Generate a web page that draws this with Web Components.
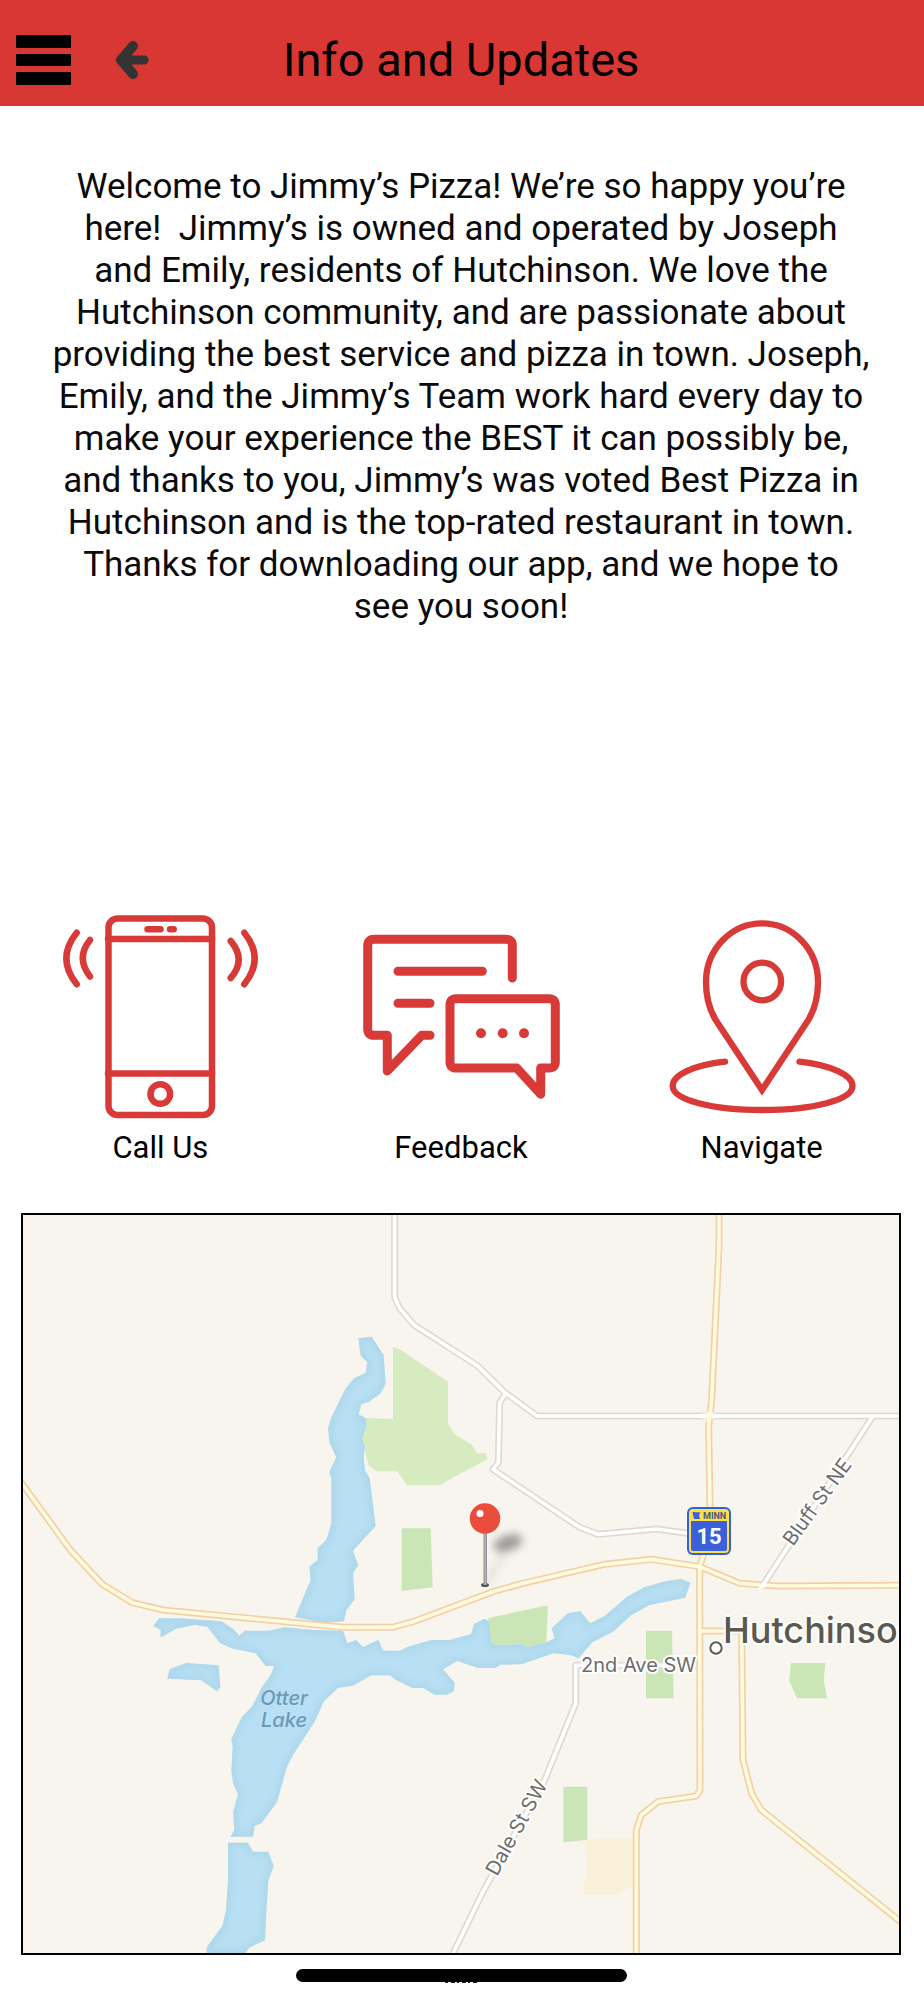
<!DOCTYPE html>
<html lang="en">
<head>
<meta charset="utf-8">
<meta name="viewport" content="width=device-width, initial-scale=1">
<title>Info and Updates</title>
<style>
  body {
    margin: 0;
    background: #fff;
    color: #0a0a0a;
    font-family: Roboto, "Liberation Sans", sans-serif;
  }
</style>
</head>
<body>
<info-page>
  <app-header slot="header">Info and Updates</app-header>
  <welcome-text slot="welcome">
    Welcome to Jimmy’s Pizza! We’re so happy you’re<br>
    here!&nbsp; Jimmy’s is owned and operated by Joseph<br>
    and Emily, residents of Hutchinson. We love the<br>
    Hutchinson community, and are passionate about<br>
    providing the best service and pizza in town. Joseph,<br>
    Emily, and the Jimmy’s Team work hard every day to<br>
    make your experience the BEST it can possibly be,<br>
    and thanks to you, Jimmy’s was voted Best Pizza in<br>
    Hutchinson and is the top-rated restaurant in town.<br>
    Thanks for downloading our app, and we hope to<br>
    see you soon!
  </welcome-text>
  <action-link slot="actions" icon="call" href="#call">Call Us</action-link>
  <action-link slot="actions" icon="feedback" href="#feedback">Feedback</action-link>
  <action-link slot="actions" icon="navigate" href="#navigate">Navigate</action-link>
  <store-map slot="map"></store-map>
  <home-indicator slot="footer"></home-indicator>
</info-page>

<script>
const createTemplate = (html) => {
  const template = document.createElement("template");
  template.innerHTML = html;
  return template;
};

class BaseElement extends HTMLElement {
  constructor() {
    super();

    this.attachShadow({ mode: "open" });
    this.shadowRoot.appendChild(
      this.constructor.template.content.cloneNode(true)
    );
  }
}

class InfoPage extends BaseElement {
  static template = createTemplate(`
  <style>
    :host {
        display: flex;
        flex-direction: column;
        min-height: 100vh;
    }
    main {
        display: flex;
        flex-direction: column;
        flex: 1;
        padding-right: 2px;
    }
    .actions {
        display: grid;
        grid-template-columns: repeat(3, 1fr);
        margin-top: 284px;
        padding: 0 10px;
    }
    .map {
        margin: 46px 21px 0;
    }
  </style>

  <slot name="header"></slot>
  <main>
    <slot name="welcome"></slot>
    <nav class="actions"><slot name="actions"></slot></nav>
    <div class="map"><slot name="map"></slot></div>
  </main>
  <slot name="footer"></slot>
`);
}

class AppHeader extends BaseElement {
  static template = createTemplate(`
  <style>
    :host {
        display: block;
    }
    header {
        display: grid;
        grid-template-columns: 1fr auto 1fr;
        align-items: center;
        box-sizing: border-box;
        height: 106px;
        padding: 15px 18px 0 16px;
        background: #d83733;
        border-bottom: 2px solid #d93329;
    }
    .buttons {
        display: flex;
        align-items: center;
        gap: 44px;
    }
    button {
        display: block;
        padding: 0;
        border: 0;
        background: none;
        cursor: pointer;
    }
    svg {
        display: block;
    }
    h1 {
        margin: 0;
        color: #000;
        font-size: 47px;
        font-weight: 400;
        line-height: 56px;
    }
  </style>

  <header>
    <div class="buttons">
      <button type="button" aria-label="Menu">
        <svg width="55" height="50" viewBox="0 0 55 50">
          <rect width="55" height="13" rx="1"/>
          <rect y="19" width="55" height="12" rx="1"/>
          <rect y="37" width="55" height="13" rx="1"/>
        </svg>
      </button>
      <button type="button" aria-label="Back">
        <svg width="34" height="50" viewBox="0 0 34 50" fill="none" stroke="#333" stroke-width="10" stroke-linecap="round" stroke-linejoin="round">
          <path d="M18 11L6 25L18 39"/>
          <path d="M8 25H29" stroke-width="9"/>
        </svg>
      </button>
    </div>
    <h1><slot></slot></h1>
  </header>
`);
}

class WelcomeText extends BaseElement {
  static template = createTemplate(`
  <style>
    :host {
        display: block;
        padding: 60px 48px 0;
    }
    p {
        margin: 0;
        font-size: 35px;
        line-height: 42px;
        text-align: center;
    }
  </style>

  <p><slot></slot></p>
`);
}

const ICONS = {
  call: `
    <g stroke-width="6.5">
      <rect x="52.5" y="6.5" width="103.5" height="196.5" rx="9"/>
      <path d="M52 27H156M52 161.5H156M91.5 17.3H104.5M114 17.3H117.7"/>
      <circle cx="104.3" cy="182" r="9.8"/>
      <path d="M34 28Q19.5 46 34 64.5M20.7 20.7Q0 46.5 20.7 72.3"/>
      <path d="M174.7 29Q190.7 47.5 174.7 66M188.3 20.7Q209 46.5 188.3 72.3"/>
    </g>`,
  feedback: `
    <g stroke-width="9">
      <path d="M155.3 66V33Q155.3 27.3 149 27.3H17Q10.7 27.3 10.7 34V117Q10.7 123.3 17 123.3H30.3V159L64.7 123.3H73"/>
      <path d="M41 59.3H125.3M41 91.3H73"/>
      <path d="M99 86.7H192Q198.3 86.7 198.3 93V150Q198.3 156 192 156H183.7V182.3L159.7 156H99Q93 156 93 150V93Q93 86.7 99 86.7Z"/>
    </g>
    <g fill="var(--brand)" stroke="none">
      <circle cx="124" cy="121.3" r="5"/>
      <circle cx="145.7" cy="121.3" r="5"/>
      <circle cx="167" cy="121.3" r="5"/>
    </g>`,
  navigate: `
    <g stroke-width="6.3">
      <path stroke-linejoin="miter" d="M104 178L57.7 108C51 97 48 86 48 70A56 58.7 0 0 1 160 70C160 86 157 97 150.3 108Z"/>
      <circle cx="104.3" cy="69.5" r="18.8"/>
      <path d="M67 149.7C36 153 14.7 163 14.7 174C14.7 188 54 198 104.5 198C155 198 194.5 188 194.5 174C194.5 163 172 153 141.5 149.7"/>
    </g>`,
};

class ActionLink extends BaseElement {
  static template = createTemplate(`
  <style>
    :host {
        --brand: #d83a38;
        display: block;
    }
    a {
        display: flex;
        flex-direction: column;
        align-items: center;
        color: #000;
        text-decoration: none;
    }
    svg {
        display: block;
        width: 208px;
        max-width: 100%;
    }
    span {
        margin-top: 9px;
        font-size: 31px;
        line-height: 38px;
    }
  </style>

  <a>
    <svg viewBox="0 0 208 208" fill="none" stroke="var(--brand)" stroke-linecap="round" stroke-linejoin="round" aria-hidden="true"></svg>
    <span><slot></slot></span>
  </a>
`);

  connectedCallback() {
    this.shadowRoot
      .querySelector("a")
      .setAttribute("href", this.getAttribute("href"));
    this.shadowRoot.querySelector("svg").innerHTML =
      ICONS[this.getAttribute("icon")];
  }
}

class StoreMap extends BaseElement {
  // The terrain is drawn on a grid three times as fine as the labels.
  static template = createTemplate(`
  <style>
    :host {
        display: block;
        border: 2px solid #000;
    }
    svg {
        display: block;
        width: 100%;
        background: #f8f5ee;
    }
    text {
        font-family: Inter, Roboto, sans-serif;
    }
    .road path {
        fill: none;
        stroke-linejoin: round;
    }
    .casing {
        stroke-width: 21;
    }
    .fill {
        stroke-width: 11;
    }
    .minor .casing {
        stroke: #dfd9d2;
    }
    .minor .fill {
        stroke: #fff;
    }
    .major .casing {
        stroke: #f2d0a9;
    }
    .major .fill {
        stroke: #fffbdc;
    }
    .label {
        fill: #6d6c6b;
        stroke: #fff;
        stroke-width: 4px;
        stroke-linejoin: round;
        paint-order: stroke;
        font-size: 20px;
    }
    .city {
        fill: #5b594f;
        font-size: 36px;
        font-weight: 500;
    }
    .lake {
        fill: #6b9ab5;
        font-size: 20px;
        font-style: italic;
        font-weight: 500;
        text-anchor: middle;
    }
    .shield {
        fill: #fff;
        font-family: Roboto, sans-serif;
        font-size: 22px;
        font-weight: 700;
        text-anchor: middle;
    }
    .state {
        fill: #48587a;
        font-family: Roboto, sans-serif;
        font-size: 9px;
        font-weight: 700;
    }
  </style>

  <svg viewBox="0 0 876 738" role="img" aria-label="Map of Hutchinson">
    <defs>
      <path id="water" d="M1006 370L1046 365L1082 420L1088 507L1073 535L1038 560L1015 568L1007 598L1028 610L1031 630L1017 672L1026 697L1022 725L1026 765L1040 790L1058 933L990 1007L1006 1051L990 1073L995 1153L970 1185L963 1219L905 1223L816 1207L863 1095L859 1055L884 1035V1000L910 975L925 925V790L919 770L940 727L920 685L915 640L926 605L967 522L993 490L1028 473L1033 442L1013 422Z
        M391 1233L408 1210H470L595 1219L632 1243L648 1262L666 1247H735L785 1237L870 1245L960 1247L973 1285L1000 1275L1020 1296L1066 1275L1081 1307H1130L1155 1295L1225 1275H1280L1345 1257L1353 1227L1385 1211L1400 1220L1405 1280L1415 1290L1495 1287L1515 1295L1570 1282L1595 1270L1586 1240L1635 1195L1672 1189L1701 1225L1745 1203L1810 1147L1863 1117L1930 1098L1975 1092L2002 1103L1987 1148L1880 1170L1825 1200L1770 1250L1708 1282L1667 1330L1645 1321L1592 1315L1495 1348L1432 1349L1417 1359H1365L1303 1338L1260 1363L1295 1403L1293 1428L1273 1439H1235L1200 1419H1168L1115 1393L1102 1381H1045L990 1412L946 1418L903 1458L875 1520L810 1620L792 1655L762 1762L715 1825L695 1833L690 1865H622L634 1845L630 1792L645 1738L630 1705L625 1665L629 1595L625 1572L657 1505L687 1475L715 1420L743 1380L754 1353H728L698 1315L625 1300L590 1283L553 1235L515 1230L457 1242L413 1268V1245Z
        M440 1362L490 1344L587 1351L592 1417L582 1429L535 1396L433 1391Z
        M615 1883H675L690 1910H736L752 1953L736 1997L730 2095L726 2176L678 2198L668 2214H551V2197L598 2133L609 2085L615 1995Z"/>
      <clipPath id="shore"><use href="#water"/></clipPath>
      <filter id="soft" x="-20%" y="-20%" width="140%" height="140%"><feGaussianBlur stdDeviation="9"/></filter>
      <filter id="shade" x="-50%" y="-80%" width="200%" height="260%"><feGaussianBlur stdDeviation="4"/></filter>
      <linearGradient id="needle">
        <stop offset="0" stop-color="#8b8f91"/>
        <stop offset="0.5" stop-color="#b4b8ba"/>
        <stop offset="1" stop-color="#85898b"/>
      </linearGradient>
    </defs>

    <g transform="scale(0.33333)">
      <path fill="#d7ebc0" d="M1110 395L1130 403L1275 500V627L1295 658L1345 688L1362 715H1388L1394 733L1280 793L1252 811H1152L1123 769H1060L1037 750L1010 655L1028 609L1110 612Z"/>
      <path fill="#cae6b6" d="M1136 940H1223L1229 1117L1136 1128ZM1869 1247H1947L1952 1450H1869ZM2304 1344H2407L2402 1395L2412 1450H2322L2299 1398ZM1621 1715H1693V1875L1621 1882Z"/>
      <path fill="#f8f0d9" d="M1688 1875L1755 1870H1835V2017L1810 2023L1785 2039H1682V1993H1693Z"/>
      <use href="#water" fill="#b8dff3"/>
      <g clip-path="url(#shore)">
        <use href="#water" fill="none" stroke="#a3cfe1" stroke-width="20" opacity="0.5" filter="url(#soft)"/>
      </g>
      <path fill="#cae6b6" d="M1396 1209L1575 1171L1570 1282L1515 1295L1495 1287L1415 1290L1405 1280Z"/>

      <g class="road minor">
        <path class="casing" d="M1115 -10V247L1130 280L1173 330L1363 452L1445 532L1542 603H2640"/>
        <path class="casing" d="M1448 536L1430 563L1426 743L1410 763L1670 937L1725 958L1900 942L2010 957"/>
        <path class="casing" d="M2550 603L2217 1115"/>
        <path class="casing" d="M2025 1351H1658V1465L1565 1695L1410 1975L1375 2040L1288 2220"/>
        <path class="fill" d="M1115 -10V247L1130 280L1173 330L1363 452L1445 532L1542 603H2640"/>
        <path class="fill" d="M1448 536L1430 563L1426 743L1410 763L1670 937L1725 958L1900 942L2010 957"/>
        <path class="fill" d="M2550 603L2217 1115"/>
        <path class="fill" d="M2025 1351H1658V1465L1565 1695L1410 1975L1375 2040L1288 2220"/>
      </g>
      <g class="road major">
        <path class="casing" d="M2031 1248H2156L2160 1635L2186 1735L2215 1785L2635 2122"/>
        <path class="casing" d="M2088 -10V95L2066 555L2057 635L2061 875V960L2030 1055L2031 1705V1725L2020 1743L1905 1760L1855 1800L1840 1845V2220"/>
        <path class="casing" d="M-10 796L0 810L142 1005L237 1107L328 1163L420 1185L960 1237H1108L1170 1220L1410 1130L1500 1105L1745 1048L1885 1033L2030 1055L2150 1105L2265 1113L2640 1111"/>
        <path class="fill" d="M2031 1248H2156L2160 1635L2186 1735L2215 1785L2635 2122"/>
        <path class="fill" d="M2088 -10V95L2066 555L2057 635L2061 875V960L2030 1055L2031 1705V1725L2020 1743L1905 1760L1855 1800L1840 1845V2220"/>
        <path class="fill" d="M-10 796L0 810L142 1005L237 1107L328 1163L420 1185L960 1237H1108L1170 1220L1410 1130L1500 1105L1745 1048L1885 1033L2030 1055L2150 1105L2265 1113L2640 1111"/>
      </g>
      <path fill="#fff" d="M2005 603L2050 594V612ZM2110 603L2066 594V612ZM2205 1120L2224 1120L2232 1100L2220 1098Z"/>
      <path fill="#fffbdc" d="M2052 590H2070L2062 620H2050Z"/>
    </g>

    <text class="lake" x="261" y="490">Otter</text>
    <text class="lake" x="261" y="512">Lake</text>
    <text class="label" x="558" y="457">2nd Ave SW</text>
    <text class="label" transform="translate(770 332) rotate(-54)">Bluff St NE</text>
    <text class="label" transform="translate(474 662) rotate(-61)">Dale St SW</text>
    <text class="label city" x="700" y="428">Hutchinson</text>
    <circle cx="693" cy="433" r="8" fill="#fff"/>
    <circle cx="693" cy="433" r="5.7" fill="#fff" stroke="#5b594f" stroke-width="2"/>

    <g transform="translate(664 292)">
      <rect width="44" height="48" rx="6" fill="#315fe0"/>
      <rect x="2" y="2" width="40" height="44" rx="4" fill="#fde047"/>
      <path fill="#3b60da" d="M4 14H40V42Q40 44 38 44H6Q4 44 4 42Z"/>
      <path fill="#3b60da" d="M5.5 5L13.5 5.5L12 8L13 12H7Z"/>
      <text class="state" x="16" y="12">MINN</text>
      <text class="shield" x="22" y="37">15</text>
    </g>

    <g>
      <path d="M463 368L482 338" stroke="#777" stroke-width="5" opacity="0.2" filter="url(#shade)"/>
      <ellipse cx="485" cy="328" rx="15" ry="8" fill="#555" opacity="0.55" transform="rotate(-18 485 328)" filter="url(#shade)"/>
      <ellipse cx="462" cy="370" rx="4" ry="2" fill="#4f5557"/>
      <rect x="460.5" y="317" width="3.5" height="53" fill="url(#needle)"/>
      <circle cx="462" cy="303.5" r="15.3" fill="#eb4d3d"/>
      <circle cx="457" cy="298.5" r="3.5" fill="#fff"/>
    </g>
  </svg>
`);
}

class HomeIndicator extends BaseElement {
  static template = createTemplate(`
  <style>
    :host {
        display: flex;
        flex-direction: column;
        align-items: center;
        padding: 0 2px 16px 0;
    }
    .bar {
        width: 331px;
        max-width: 40%;
        height: 13px;
        border-radius: 7px;
        background: #000;
    }
    svg {
        display: block;
    }
  </style>

  <div class="bar"></div>
  <svg width="34" height="2" viewBox="0 0 34 2" aria-hidden="true">
    <path d="M1 0H4M7 0H11M13 0H15M18 0H22M24 0H26M29 0H33" stroke="#222" stroke-width="2"/>
  </svg>
`);
}

customElements.define("info-page", InfoPage);
customElements.define("app-header", AppHeader);
customElements.define("welcome-text", WelcomeText);
customElements.define("action-link", ActionLink);
customElements.define("store-map", StoreMap);
customElements.define("home-indicator", HomeIndicator);
</script>
</body>
</html>
